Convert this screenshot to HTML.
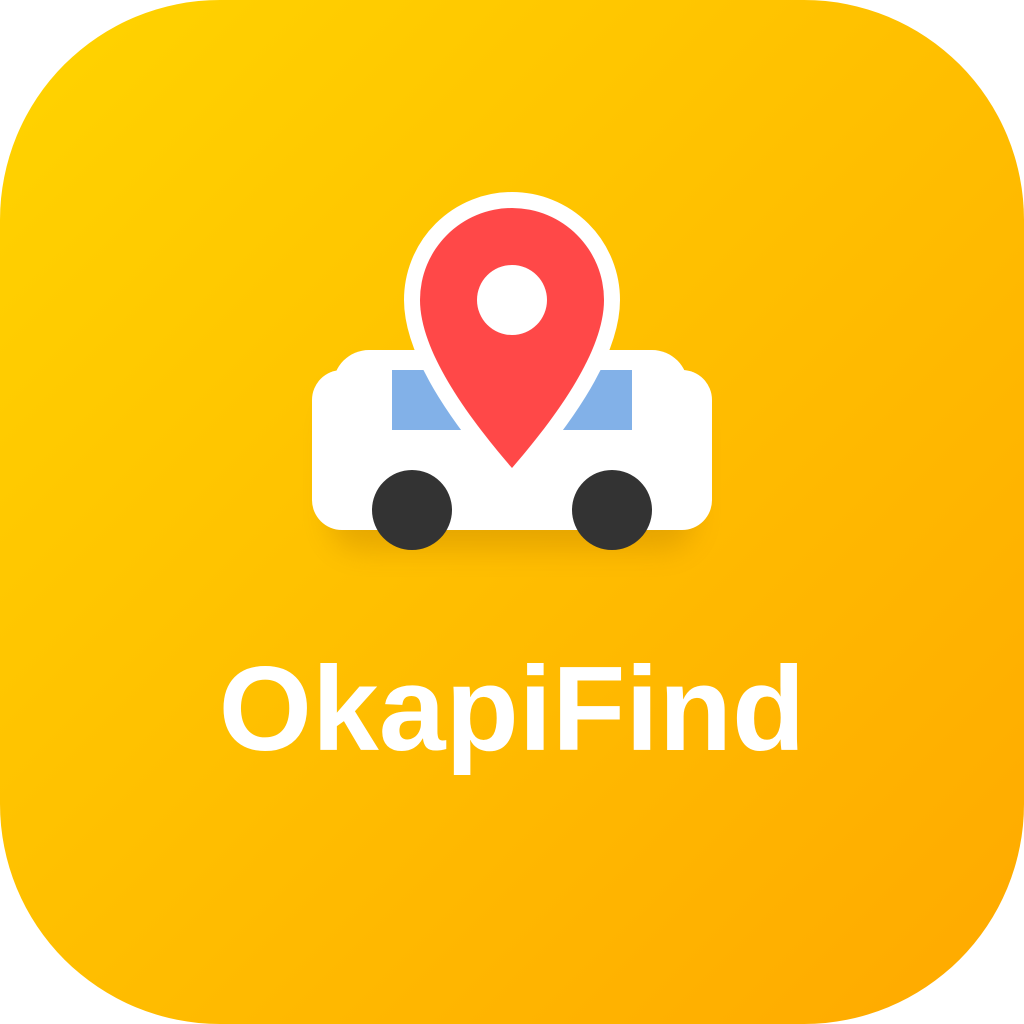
<!DOCTYPE html>
<html><head><style>
html,body{margin:0;padding:0;background:#fff;width:1024px;height:1024px;overflow:hidden}
</style></head><body>
<svg width="1024" height="1024" viewBox="0 0 1024 1024" xmlns="http://www.w3.org/2000/svg">
<defs>
<linearGradient id="bg" x1="0" y1="0" x2="1" y2="1">
<stop offset="0" stop-color="#ffd400"/>
<stop offset="1" stop-color="#ffa900"/>
</linearGradient>
<filter id="sh" x="-20%" y="-20%" width="140%" height="160%">
<feGaussianBlur stdDeviation="14"/>
</filter>
</defs>
<rect x="0" y="0" width="1024" height="1024" rx="220" fill="url(#bg)"/>
<rect x="330" y="400" width="364" height="150" rx="30" fill="#c98a00" opacity="0.45" filter="url(#sh)"/>
<rect x="333" y="350" width="355" height="80" rx="36" fill="#fff"/>
<rect x="312" y="370" width="400" height="160" rx="30" fill="#fff"/>
<rect x="392" y="370" width="240" height="60" fill="#82b1e8"/>
<circle cx="412" cy="510" r="40" fill="#333"/>
<circle cx="612" cy="510" r="40" fill="#333"/>
<path d="M512 468 C475 425 420 355 420 300 A92 92 0 0 1 604 300 C604 355 549 425 512 468Z" fill="#fff" stroke="#fff" stroke-width="32" stroke-linejoin="round"/>
<path d="M512 468 C475 425 420 355 420 300 A92 92 0 0 1 604 300 C604 355 549 425 512 468Z" fill="#ff4848"/>
<circle cx="512" cy="300" r="35" fill="#fff"/>
<text x="512" y="750" text-anchor="middle" font-family="Liberation Sans, sans-serif" font-weight="bold" font-size="120" fill="#fff">OkapiFind</text>
</svg>
</body></html>
